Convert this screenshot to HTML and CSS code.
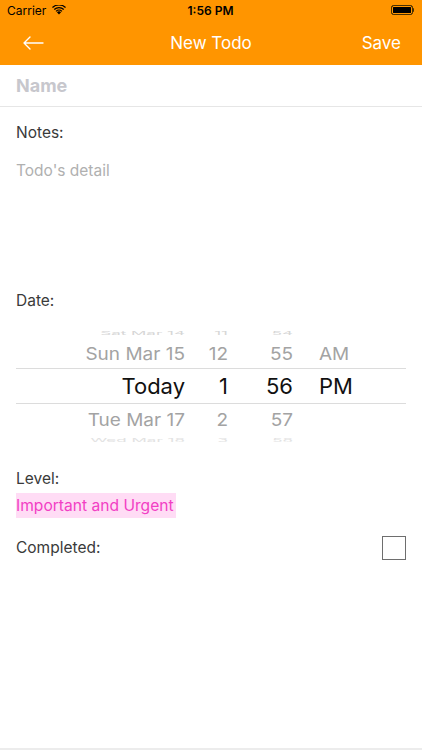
FILE: index.html
```html
<!DOCTYPE html>
<html>
<head>
<meta charset="utf-8">
<link rel="stylesheet" href="styles.css">
</head>
<body>
<div class="screen">
  <header class="top">
    <div class="status">
      <div class="status-left">
        <span class="carrier">Carrier</span>
        <svg class="wifi" width="14" height="10" viewBox="0 0 14 10">
          <path d="M7 9.6 L4.9 7.3 A3 3 0 0 1 9.1 7.3 Z" fill="#000"/>
          <path d="M3.6 5.9 A4.9 4.9 0 0 1 10.4 5.9 L9.6 6.8 A3.7 3.7 0 0 0 4.4 6.8 Z" fill="#000"/>
          <path d="M1.8 4 A7.5 7.5 0 0 1 12.2 4 L11.3 5 A6.2 6.2 0 0 0 2.7 5 Z" fill="#000"/>
          <path d="M0 2.1 A10 10 0 0 1 14 2.1 L13.1 3.1 A8.7 8.7 0 0 0 0.9 3.1 Z" fill="#000"/>
        </svg>
      </div>
      <span class="time">1:56 PM</span>
      <div class="battery"><span class="battery-fill"></span><span class="battery-nub"></span></div>
    </div>
    <nav class="nav">
      <svg class="back" width="22" height="14" viewBox="0 0 22 14">
        <path d="M21 7 H2 M8 1 L2 7 L8 13" fill="none" stroke="#fff" stroke-width="1.4" stroke-linecap="round" stroke-linejoin="round"/>
      </svg>
      <span class="title">New Todo</span>
      <span class="save">Save</span>
    </nav>
  </header>

  <div class="name-row"><span class="name-ph">Name</span></div>

  <section class="notes">
    <div class="label">Notes:</div>
    <div class="notes-ph">Todo's detail</div>
  </section>

  <section class="date">
    <div class="label">Date:</div>
    <div class="picker">
      <div class="prow partial top-partial"><span class="c1">Sat Mar 14</span><span class="c2">11</span><span class="c3">54</span><span class="c4"></span></div>
      <div class="prow side side-top"><span class="c1">Sun Mar 15</span><span class="c2">12</span><span class="c3">55</span><span class="c4">AM</span></div>
      <div class="prow selected"><span class="c1">Today</span><span class="c2">1</span><span class="c3">56</span><span class="c4">PM</span></div>
      <div class="prow side side-bottom"><span class="c1">Tue Mar 17</span><span class="c2">2</span><span class="c3">57</span><span class="c4"></span></div>
      <div class="prow partial bottom-partial"><span class="c1">Wed Mar 18</span><span class="c2">3</span><span class="c3">58</span><span class="c4"></span></div>
    </div>
  </section>

  <section class="level">
    <div class="label">Level:</div>
    <span class="level-tag">Important and Urgent</span>
  </section>

  <section class="completed">
    <span class="label">Completed:</span>
    <span class="checkbox"></span>
  </section>

  <div class="spacer"></div>
  <div class="bottom-line"></div>
</div>
</body>
</html>
```

FILE: styles.css
```css
* { box-sizing: border-box; }
html, body { margin: 0; padding: 0; }
body {
  font-family: Inter, "Liberation Sans", Arial, sans-serif;
  background: #fff;
  width: 422px;
  height: 750px;
  overflow: hidden;
}
.screen {
  width: 422px;
  height: 750px;
  display: flex;
  flex-direction: column;
}
.top { background: #ff9500; }
.status {
  height: 20px;
  display: flex;
  align-items: center;
  justify-content: space-between;
  padding: 0 8px 0 7px;
  color: #000;
  font-size: 12px;
}
.status-left { display: flex; align-items: center; gap: 6px; width: 80px; }
.wifi { margin-top: -1px; }
.time { font-weight: 600; font-size: 12px; }
.battery {
  width: 80px;
  display: flex;
  justify-content: flex-end;
  align-items: center;
}
.battery-fill {
  width: 22px;
  height: 10px;
  border: 1px solid #4a3000;
  border-radius: 2.5px;
  background: #000;
  box-shadow: inset 0 0 0 1px #ff9500;
}
.battery-nub {
  width: 1.5px;
  height: 4px;
  background: #4a3000;
  border-radius: 0 1px 1px 0;
}
.nav {
  position: relative;
  height: 45px;
  display: flex;
  align-items: center;
  justify-content: space-between;
  padding: 0 21px 0 22px;
  color: #fff;
  font-size: 17px;
}
.back { display: block; }
.title { position: absolute; left: 0; right: 0; text-align: center; pointer-events: none; }

.name-row {
  height: 42px;
  display: flex;
  align-items: center;
  padding: 0 16px;
  border-bottom: 1px solid #e6e6e6;
}
.name-ph {
  font-weight: 700;
  font-size: 18px;
  color: #c7c7cd;
  margin-top: -1px;
}

.label {
  font-size: 15.5px;
  color: #3a3a3a;
  line-height: 20px;
}
.notes {
  padding: 16px 16px 0;
  height: 184px;
}
.notes-ph {
  margin-top: 18px;
  font-size: 15.5px;
  color: #b0b0b0;
  line-height: 20px;
}
.date .label { padding-left: 16px; }
.picker {
  margin-top: 15px;
  height: 116px;
  overflow: hidden;
  display: flex;
  flex-direction: column;
}
.prow {
  display: grid;
  grid-template-columns: 185px 43px 65px auto;
  align-items: center;
  white-space: nowrap;
  flex: none;
}
.c1, .c2, .c3 { text-align: right; }
.c4 { padding-left: 26px; }
.side {
  font-size: 19px;
  color: #a3a3a3;
}
.side-top { height: 32px; }
.side-bottom { height: 31px; }
.side span { display: block; }
.side-top span { transform: translateY(2px) scaleY(0.9); }
.side-bottom span { transform: translateY(1px) scaleY(0.9); }
.selected {
  height: 36px;
  font-size: 22px;
  color: #111;
  border-top: 1px solid #dcdcdc;
  border-bottom: 1px solid #dcdcdc;
  margin: 0 16px;
  grid-template-columns: 169px 43px 65px auto;
}
.partial {
  height: 10px;
  font-size: 17px;
  overflow: visible;
}
.partial span { display: block; transform: scaleY(0.3); line-height: 10px; }
.top-partial { color: #d6d6d6; }
.top-partial span { transform: translateY(2px) scaleY(0.3); }
.bottom-partial { color: #e2e2e2; }

.level { padding: 27px 16px 0; display: flex; flex-direction: column; align-items: flex-start; }
.level-tag {
  margin-top: 4px;
  background: #ffdcf5;
  color: #f23fc4;
  font-size: 15.6px;
  line-height: 25px;
  padding: 0 2px 0 0;
}
.completed {
  padding: 18px 16px 0;
  display: flex;
  justify-content: space-between;
  align-items: center;
}
.checkbox {
  width: 24px;
  height: 24px;
  border: 1.5px solid #6e6e6e;
  background: #fff;
}
.spacer { flex: 1; }
.bottom-line { height: 2px; background: #ececec; }
```
